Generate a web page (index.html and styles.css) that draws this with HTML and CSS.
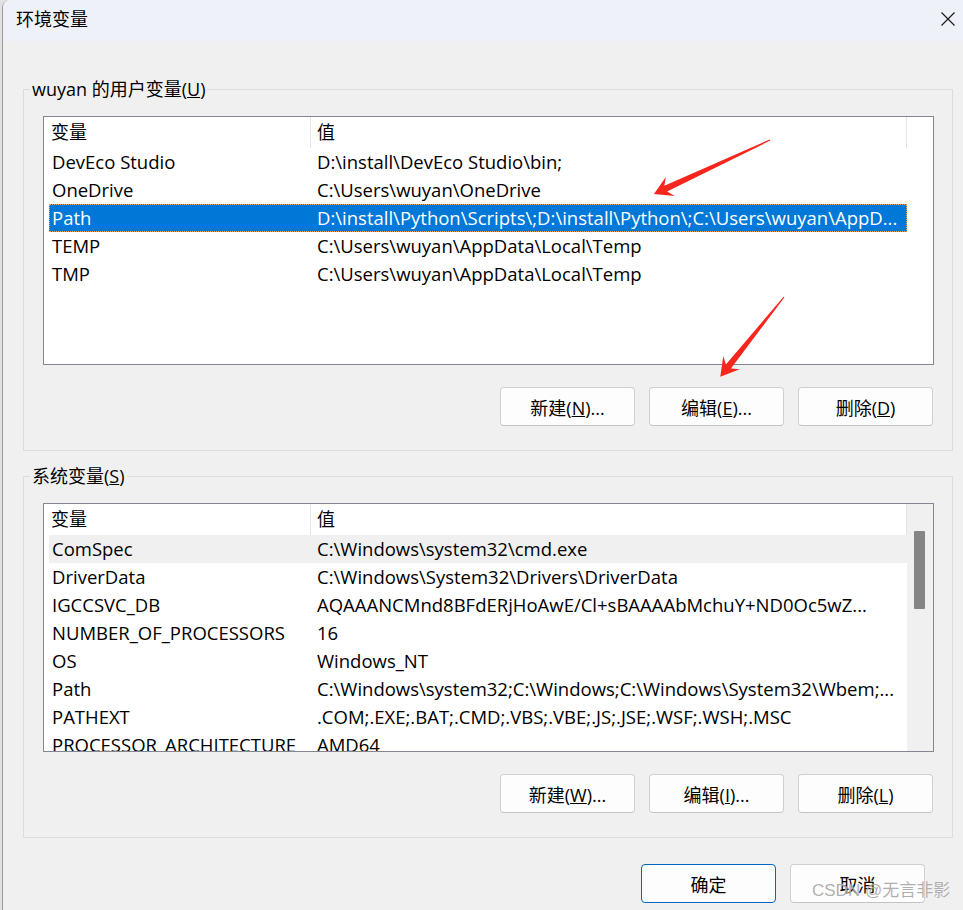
FILE: index.html
```html
<!DOCTYPE html>
<html lang="zh-CN">

<head>
  <meta charset="UTF-8" />
  <meta name="viewport" content="width=device-width, initial-scale=1.0" />
  <title>环境变量</title>
  <link rel="stylesheet" href="styles.css">
</head>

<body>
  <div class="window">
    <div class="titlebar">
      <span class="title">环境变量</span>
      <span class="close">
        <svg width="16" height="16" viewBox="0 0 16 16">
          <path d="M1.5 1.5 L14.5 14.5 M14.5 1.5 L1.5 14.5" stroke="#1b1b1b" stroke-width="1.2" fill="none" />
        </svg>
      </span>
    </div>

    <div class="content">
      <!-- user variables -->
      <fieldset class="group">
        <legend class="group-title">wuyan 的用户变量(<u>U</u>)</legend>
        <div class="group-body">
          <div class="listview">
            <div class="lv-main">
              <div class="lv-head">
                <div class="head-name">变量</div>
                <div class="head-value">值</div>
              </div>
              <div class="lv-row">
                <div class="cell-name">DevEco Studio</div>
                <div class="cell-value">D:\install\DevEco Studio\bin;</div>
              </div>
              <div class="lv-row">
                <div class="cell-name">OneDrive</div>
                <div class="cell-value">C:\Users\wuyan\OneDrive</div>
              </div>
              <div class="lv-row selected">
                <div class="cell-name">Path</div>
                <div class="cell-value">D:\install\Python\Scripts\;D:\install\Python\;C:\Users\wuyan\AppD...</div>
              </div>
              <div class="lv-row">
                <div class="cell-name">TEMP</div>
                <div class="cell-value">C:\Users\wuyan\AppData\Local\Temp</div>
              </div>
              <div class="lv-row">
                <div class="cell-name">TMP</div>
                <div class="cell-value">C:\Users\wuyan\AppData\Local\Temp</div>
              </div>
            </div>
            <div class="lv-scroll"></div>
          </div>
          <div class="button-row">
            <button class="btn">新建(<u>N</u>)...</button>
            <button class="btn">编辑(<u>E</u>)...</button>
            <button class="btn">删除(<u>D</u>)</button>
          </div>
        </div>
      </fieldset>

      <!-- system variables -->
      <fieldset class="group system">
        <legend class="group-title">系统变量(<u>S</u>)</legend>
        <div class="group-body">
          <div class="listview">
            <div class="lv-main">
              <div class="lv-head">
                <div class="head-name">变量</div>
                <div class="head-value">值</div>
              </div>
              <div class="lv-row hover">
                <div class="cell-name">ComSpec</div>
                <div class="cell-value">C:\Windows\system32\cmd.exe</div>
              </div>
              <div class="lv-row">
                <div class="cell-name">DriverData</div>
                <div class="cell-value">C:\Windows\System32\Drivers\DriverData</div>
              </div>
              <div class="lv-row">
                <div class="cell-name">IGCCSVC_DB</div>
                <div class="cell-value">AQAAANCMnd8BFdERjHoAwE/Cl+sBAAAAbMchuY+ND0Oc5wZ...</div>
              </div>
              <div class="lv-row">
                <div class="cell-name">NUMBER_OF_PROCESSORS</div>
                <div class="cell-value">16</div>
              </div>
              <div class="lv-row">
                <div class="cell-name">OS</div>
                <div class="cell-value">Windows_NT</div>
              </div>
              <div class="lv-row">
                <div class="cell-name">Path</div>
                <div class="cell-value">C:\Windows\system32;C:\Windows;C:\Windows\System32\Wbem;...</div>
              </div>
              <div class="lv-row">
                <div class="cell-name">PATHEXT</div>
                <div class="cell-value">.COM;.EXE;.BAT;.CMD;.VBS;.VBE;.JS;.JSE;.WSF;.WSH;.MSC</div>
              </div>
              <div class="lv-row">
                <div class="cell-name">PROCESSOR_ARCHITECTURE</div>
                <div class="cell-value">AMD64</div>
              </div>
            </div>
            <div class="lv-scroll">
              <div class="thumb"></div>
            </div>
          </div>
          <div class="button-row">
            <button class="btn">新建(<u>W</u>)...</button>
            <button class="btn">编辑(<u>I</u>)...</button>
            <button class="btn">删除(<u>L</u>)</button>
          </div>
        </div>
      </fieldset>

      <div class="dialog-buttons">
        <button class="btn default">确定</button>
        <button class="btn">取消</button>
      </div>
    </div>
  </div>

  <!-- red annotation arrows -->
  <svg class="annotations" width="963" height="910" viewBox="0 0 963 910">
    <g transform="translate(770 140) rotate(155.04)">
      <polygon points="0,-0.6 115,-3.2 110,-10.5 128,0 110,10.5 115,3.2 0,0.6" fill="#f5261c" />
    </g>
    <g transform="translate(784 297) rotate(128.66)">
      <polygon points="0,-0.6 89,-3.2 84,-10.5 102,0 84,10.5 89,3.2 0,0.6" fill="#f5261c" />
    </g>
  </svg>

  <div class="watermark">CSDN @无言非影</div>
</body>

</html>
```

FILE: styles.css
```css
:root {
  --face: #f0f0f0;
  --group-line: #dcdcdc;
  --list-line: #828790;
  --select: #0078d7;
  --font-ui: "Open Sans", "Noto Sans CJK SC", sans-serif;
}

body {
  margin: 0;
  background-color: #e2e2e2;
  font-family: var(--font-ui);
  font-size: 18.5px;
  color: #000;
  overflow: hidden;
}

.window {
  margin-left: 2px;
  height: 910px;
  background-color: var(--face);
  border-left: 1px solid #9a9a9a;
  border-top-left-radius: 8px;
  overflow: hidden;
}

.titlebar {
  display: flex;
  align-items: center;
  justify-content: space-between;
  height: 41px;
  padding: 0 7px 0 13px;
  background-color: #eef2f8;
}

.title {
  font-size: 18px;
  line-height: 24px;
  margin-top: -3px;
}

.close {
  display: flex;
  margin-top: -4px;
}

.content {
  padding: 36px 10px 0 20px;
}

.group {
  margin: 0;
  padding: 0 6px 24px;
  border: 1px solid var(--group-line);
  min-width: 0;
}

.group.system {
  margin-top: 13px;
}

.group-title {
  padding: 0 2px;
  font-size: 18px;
  line-height: 24px;
}

.group-body {
  padding: 15px 12px 0 13px;
}

.listview {
  display: flex;
  height: 249px;
  box-sizing: border-box;
  border: 1px solid var(--list-line);
  background-color: #fff;
  overflow: hidden;
}

.lv-main {
  width: 863px;
  flex: none;
}

.lv-scroll {
  flex: 1;
}

.system .lv-scroll {
  background-color: #f0f0f0;
  padding: 27px 0 0 7px;
}

.thumb {
  width: 11px;
  height: 78px;
  background-color: #858585;
  border-radius: 1px;
}

.lv-head {
  display: flex;
  height: 31px;
  line-height: 31px;
  font-size: 18px;
}

.head-name {
  width: 267px;
  box-sizing: border-box;
  padding-left: 7px;
  border-right: 1px solid #e5e5e5;
}

.head-value {
  flex: 1;
  padding-left: 6px;
  border-right: 1px solid #e5e5e5;
}

.lv-row {
  display: flex;
  margin-left: 5px;
  height: 28px;
  line-height: 28px;
  white-space: nowrap;
}

.lv-row.selected {
  background-color: var(--select);
  color: #fff;
  outline: 1px dotted #f2a35a;
  outline-offset: -1px;
}

.lv-row.hover {
  background-color: #f0f0f0;
}

.cell-name {
  width: 261px;
  flex: none;
  box-sizing: border-box;
  padding-left: 3px;
  overflow: hidden;
}

.cell-value {
  flex: 1;
  padding-left: 7px;
  overflow: hidden;
}

.button-row {
  display: flex;
  justify-content: flex-end;
  gap: 14px;
  margin-top: 22px;
  margin-right: 1px;
}

.btn {
  width: 135px;
  height: 39px;
  padding: 0;
  font-family: var(--font-ui);
  font-size: 18px;
  color: #000;
  background-color: #fdfdfd;
  border: 1px solid #d0d0d0;
  border-bottom-color: #c4c4c4;
  border-radius: 4px;
}

.btn.default {
  border-color: #0067c0;
}

.dialog-buttons {
  display: flex;
  justify-content: flex-end;
  gap: 14px;
  margin: 26px 28px 0 0;
}

.annotations {
  position: absolute;
  top: 0;
  left: 0;
  pointer-events: none;
}

.watermark {
  position: absolute;
  left: 812px;
  top: 879px;
  font-family: "Liberation Sans", "Noto Sans CJK SC", sans-serif;
  font-size: 17px;
  line-height: 24px;
  color: rgba(140, 140, 140, 0.7);
  text-shadow: 0 0 1px rgba(255, 255, 255, 0.9);
  pointer-events: none;
}
```
